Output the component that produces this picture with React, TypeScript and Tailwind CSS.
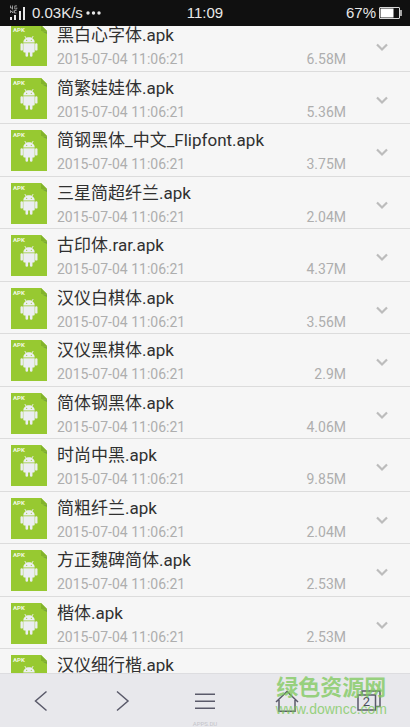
const files = [
  { name: "黑白心字体.apk", size: "6.58M" },
  { name: "简繁娃娃体.apk", size: "5.36M" },
  { name: "简钢黑体_中文_Flipfont.apk", size: "3.75M" },
  { name: "三星简超纤兰.apk", size: "2.04M" },
  { name: "古印体.rar.apk", size: "4.37M" },
  { name: "汉仪白棋体.apk", size: "3.56M" },
  { name: "汉仪黑棋体.apk", size: "2.9M" },
  { name: "简体钢黑体.apk", size: "4.06M" },
  { name: "时尚中黑.apk", size: "9.85M" },
  { name: "简粗纤兰.apk", size: "2.04M" },
  { name: "方正魏碑简体.apk", size: "2.53M" },
  { name: "楷体.apk", size: "2.53M" },
  { name: "汉仪细行楷.apk", size: "" },
];

function ApkIcon() {
  return (
    <div className="relative h-[41px] w-9 shrink-0">
      <svg viewBox="0 0 36 41" className="h-full w-full" aria-hidden="true">
        <path d="M0 0H30L36 6V41H0Z" fill="#97c931" />
        <path d="M31 6.500H36V9Z" fill="#7aa63a" />
        <path d="M30 0L36 6H30Z" fill="#82b32b" />
        <g fill="#eceef2">
          <path d="M12.300 17.600C12.300 14.200 15 12.200 18 12.200S23.700 14.200 23.700 17.600Z" />
          <path d="M12.300 18.300H23.700V26.500Q23.700 27.500 22.700 27.500H21.500V30.500A1.300 1.300 0 0 1 18.900 30.500V27.500H17.100V30.500A1.300 1.300 0 0 1 14.500 30.500V27.500H13.300Q12.300 27.500 12.300 26.500Z" />
          <rect x="9.500" y="18.200" width="2.400" height="7.400" rx="1.200" />
          <rect x="24.100" y="18.200" width="2.400" height="7.400" rx="1.200" />
        </g>
        <path d="M15.200 13.400L13.800 11M20.800 13.400L22.200 11" stroke="#eceef2" strokeWidth="0.900" />
        <circle cx="15.700" cy="15.300" r="0.600" fill="#97c931" />
        <circle cx="20.300" cy="15.300" r="0.600" fill="#97c931" />
      </svg>
      <span className="absolute top-[2px] left-[2px] text-[6px] leading-[6px] font-bold text-[#f2f8e4]">APK</span>
    </div>
  );
}

function Row({ name, size }: { name: string; size: string }) {
  return (
    <li className="flex items-start border-b border-[#dcdcdc] pt-[6px] pr-[21px] pl-[11px] odd:h-[53px] even:h-[52px]">
      <ApkIcon />
      <div className="ml-[10px] min-w-0 flex-1">
        <p className="truncate text-[17px] leading-5 text-[#303030]">{name}</p>
        <p className="mt-[6px] flex justify-between text-[14px] leading-4 text-[#aeaeae]">
          <time>2015-07-04 11:06:21</time>
          <span>{size}</span>
        </p>
      </div>
      <button type="button" aria-label="展开" className="mt-[14px] ml-[29px] h-4 w-[14px]">
        <svg viewBox="0 0 14 16" className="h-4 w-[14px]" fill="none" stroke="#bcbcbc" strokeWidth="2.200" aria-hidden="true">
          <path d="M2 5.500L7 10.500L12 5.500" />
        </svg>
      </button>
    </li>
  );
}

function StatusBar() {
  return (
    <header className="relative z-10 grid h-[26px] shrink-0 grid-cols-3 items-center bg-[#101010] px-2 font-['Liberation_Sans',sans-serif] text-[15px] leading-5 text-[#e8e8e8]">
      <div className="flex items-center pl-[2px]">
        <svg viewBox="0 0 16 16" className="h-4 w-4 shrink-0" fill="#e8e8e8" aria-hidden="true">
          <path d="M0 12H2V15H0ZM4 10H6V15H4ZM9 6H11V15H9ZM13 2H15V15H13Z" />
          <path d="M0.500 0.500V3H3M2.500 0.500V4.500M7 0.900H4.800V4H6.800V2.500M0.500 8V5.500L3 8V5.500M6.500 5.500H4.500V8H6.500" fill="none" stroke="#b5b5b5" strokeWidth="0.800" />
        </svg>
        <span className="ml-[6px]">0.03K/s</span>
        <svg viewBox="0 0 16 4" className="ml-[3px] h-1 w-4 shrink-0" fill="#e8e8e8" aria-hidden="true">
          <circle cx="2" cy="2" r="1.700" />
          <circle cx="7.500" cy="2" r="1.700" />
          <circle cx="13" cy="2" r="1.700" />
        </svg>
      </div>
      <time className="text-center">11:09</time>
      <div className="flex items-center justify-end gap-[3px]">
        <span>67%</span>
        <svg viewBox="0 0 23 12" className="h-3 w-[23px] shrink-0" aria-hidden="true">
          <rect x="0.500" y="0.500" width="20" height="11" rx="0.500" fill="none" stroke="#d8d8d8" />
          <rect x="1.500" y="1.500" width="13" height="9" fill="#fff" />
          <path d="M22 3V9" stroke="#d8d8d8" strokeWidth="1.500" />
        </svg>
      </div>
    </header>
  );
}

const navButton = "flex h-full items-center justify-center";

function NavBar() {
  return (
    <nav className="relative grid h-[54px] shrink-0 grid-cols-5 border-t border-[#dddde0] bg-[#e8e8ec]">
      <button type="button" aria-label="后退" className={navButton}>
        <svg viewBox="0 0 28 28" className="size-7" fill="none" stroke="#5a5a6a" strokeWidth="1.500">
          <path d="M19.500 4.500L8.500 14L19.500 23.500" />
        </svg>
      </button>
      <button type="button" aria-label="前进" className={navButton}>
        <svg viewBox="0 0 28 28" className="size-7" fill="none" stroke="#5a5a6a" strokeWidth="1.500">
          <path d="M8 4.500L19 14L8 23.500" />
        </svg>
      </button>
      <button type="button" aria-label="菜单" className={navButton}>
        <svg viewBox="0 0 28 28" className="size-7" fill="none" stroke="#5a5a6a" strokeWidth="1.500">
          <path d="M4 7.200H24M4 14.200H24M4 21.200H24" />
        </svg>
      </button>
      <button type="button" aria-label="主页" className={navButton}>
        <svg viewBox="0 0 28 28" className="size-7" fill="none" stroke="#5a5a6a" strokeWidth="1.500">
          <path d="M3 15L14 4.500L25 15M6 13V24.200H22V13" />
        </svg>
      </button>
      <button type="button" aria-label="窗口" className={`${navButton} relative`}>
        <svg viewBox="0 0 28 28" className="size-7" fill="none" stroke="#5a5a6a" strokeWidth="1.500">
          <path d="M3 8H20.500V23H3ZM7 8V4H25V19.500H20.500" />
        </svg>
        <span className="absolute inset-0 flex items-center justify-center pt-[3px] pr-[5px] text-[13px] leading-4 text-[#4a4a5a]">2</span>
      </button>
      <p className="pointer-events-none absolute top-[2px] right-[23px] text-center text-[#7cc85a] opacity-75">
        <span className="block text-[22px] leading-6 font-bold">绿色资源网</span>
        <span className="block font-['Liberation_Sans',sans-serif] text-[14px] leading-[18px]">www.downcc.com</span>
      </p>
      <span className="pointer-events-none absolute inset-x-0 bottom-0 text-center text-[6px] leading-[7px] text-[#c4c4ca]">APPS.DU</span>
    </nav>
  );
}

export default function App() {
  return (
    <div className="flex h-screen flex-col bg-[#f6f6f6] font-[Roboto,'Noto_Sans_CJK_SC',sans-serif]">
      <StatusBar />
      <main className="min-h-0 flex-1 overflow-hidden">
        <ul className="-mt-[7px]">
          {files.map((file) => (
            <Row key={file.name} name={file.name} size={file.size} />
          ))}
        </ul>
      </main>
      <NavBar />
    </div>
  );
}
